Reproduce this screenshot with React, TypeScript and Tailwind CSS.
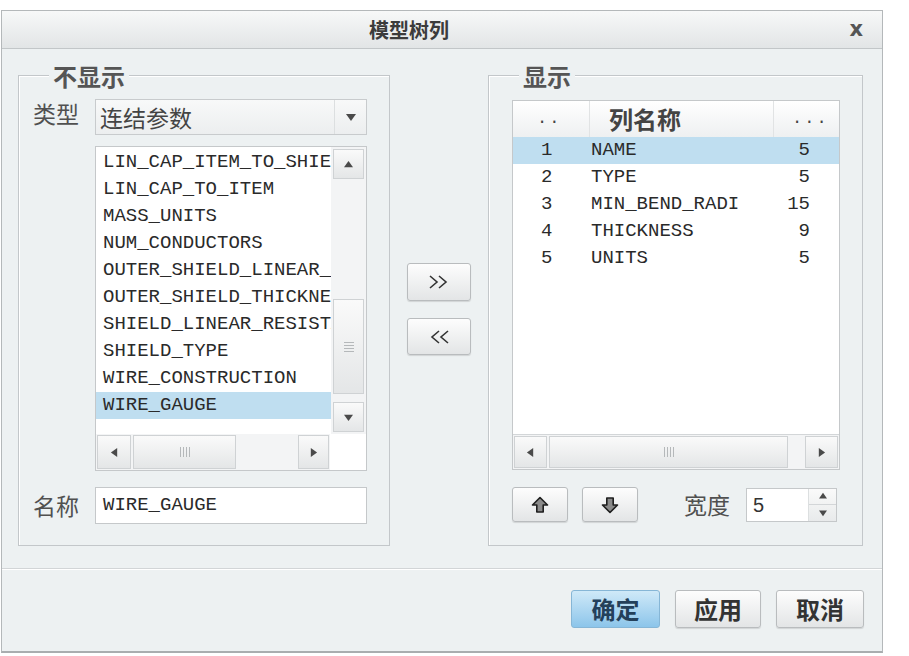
import React from "react";

const CJK = "font-['Noto_Sans_CJK_SC',sans-serif]";
const MONO = "font-['Liberation_Mono','Noto_Sans_CJK_SC',monospace]";

const HIDDEN_ITEMS = [
  "LIN_CAP_ITEM_TO_SHIELD",
  "LIN_CAP_TO_ITEM",
  "MASS_UNITS",
  "NUM_CONDUCTORS",
  "OUTER_SHIELD_LINEAR_RESISTANCE",
  "OUTER_SHIELD_THICKNESS",
  "SHIELD_LINEAR_RESISTANCE",
  "SHIELD_TYPE",
  "WIRE_CONSTRUCTION",
  "WIRE_GAUGE",
];

const SHOWN_COLUMNS = [
  { idx: 1, name: "NAME", width: 5 },
  { idx: 2, name: "TYPE", width: 5 },
  { idx: 3, name: "MIN_BEND_RADI", width: 15 },
  { idx: 4, name: "THICKNESS", width: 9 },
  { idx: 5, name: "UNITS", width: 5 },
];

// small solid triangle used on scroll / combo buttons
function Tri({ dir, size = 9 }: { dir: "up" | "down" | "left" | "right"; size?: number }) {
  const pts = {
    up: "0,8 5,1 10,8",
    down: "0,2 10,2 5,9",
    left: "8,0 8,10 1,5",
    right: "2,0 2,10 9,5",
  }[dir];
  return (
    <svg width={size} height={size} viewBox="0 0 10 10">
      <polygon points={pts} fill="#4a4a4a" />
    </svg>
  );
}

function BlockArrow({ up }: { up: boolean }) {
  return (
    <svg width="18" height="18" viewBox="0 0 18 18" className={up ? "" : "rotate-180"}>
      <path d="M9 1.5 L16.5 9 H12.2 V16 H5.8 V9 H1.5 Z" fill="#8a8a8a" stroke="#1f1f1f" strokeWidth="1.6" strokeLinejoin="round" />
    </svg>
  );
}

function Chevrons({ right }: { right: boolean }) {
  return (
    <svg width="22" height="16" viewBox="0 0 22 16" className={right ? "" : "rotate-180"}>
      <path d="M2 2 L9 8 L2 14 M11 2 L18 8 L11 14" fill="none" stroke="#333" strokeWidth="1.6" />
    </svg>
  );
}

function Grip({ vertical }: { vertical?: boolean }) {
  return (
    <div className={`flex ${vertical ? "flex-col gap-[2px]" : "flex-row gap-[2px]"}`}>
      {[0, 1, 2, 3].map((i) => (
        <div key={i} className={vertical ? "h-px w-[10px] bg-[#b5b8ba]" : "h-[10px] w-px bg-[#b5b8ba]"} />
      ))}
    </div>
  );
}

const scrollBtn =
  "flex items-center justify-center border border-[#cfd2d4] bg-gradient-to-b from-[#fafafa] to-[#e4e6e7]";

function Button({ children, className = "" }: { children: React.ReactNode; className?: string }) {
  return (
    <div
      className={`flex items-center justify-center rounded-[3px] border border-[#b9bcbe] bg-gradient-to-b from-[#fdfdfd] to-[#e3e5e6] shadow-[0_1px_1px_rgba(0,0,0,0.12)] ${className}`}
    >
      {children}
    </div>
  );
}

export default function App() {
  return (
    <div className={`h-[656px] w-[909px] overflow-hidden bg-white pt-[10px] ${CJK}`}>
      <div className="ml-px flex h-[643px] w-[882px] flex-col border-x border-t border-b-2 border-[#b4b8ba] border-b-[#a9adaf] bg-[#edf1f2]">
        {/* title bar */}
        <div className="flex h-[38px] items-center border-b border-[#c2c6c8] bg-gradient-to-b from-[#f7f8f8] to-[#e2e5e6]">
          <div className="flex-1 text-center text-[20px] font-bold leading-none text-[#3c3c3c]">
            模型树列
          </div>
          <div className="flex w-[66px] justify-end pr-[19px] font-['DejaVu_Sans',sans-serif] text-[21px] font-bold leading-none text-[#555]">
            x
          </div>
        </div>

        {/* body */}
        <div className="flex h-[519px] pl-[16px] pt-[26px]">
          {/* 不显示 group */}
          <div className="relative h-[471px] w-[372px] border border-[#c3c7ca] shadow-[inset_1px_1px_0_#ffffff] pl-[14px] pt-[23px]">
            <span className="absolute left-[30px] top-[-14px] bg-[#edf1f2] px-[4px] text-[24px] font-bold leading-[28px] text-[#555]">
              不显示
            </span>

            <div className="flex items-start">
              <div className="w-[62px] text-[23px] leading-[28px] text-[#505050]">类型</div>
              <div className="flex h-[36px] w-[272px] items-center border border-[#c8cbcd] bg-gradient-to-b from-[#f8f9f9] to-[#eceeef]">
                <div className="flex-1 pl-[4px] text-[23px] leading-none text-[#444]">连结参数</div>
                <div className="flex h-full w-[32px] items-center justify-center border-l border-[#dcdfe0]">
                  <Tri dir="down" size={10} />
                </div>
              </div>
            </div>

            {/* list box */}
            <div className="ml-[62px] mt-[11px] flex h-[325px] w-[272px] flex-col border border-[#c5c8ca] bg-white">
              <div className="flex h-[287px]">
                <div className={`flex-1 overflow-hidden pt-[2px] ${MONO} text-[19px] text-[#2a2a2a]`}>
                  {HIDDEN_ITEMS.map((t) => (
                    <div
                      key={t}
                      className={`h-[27px] overflow-hidden whitespace-nowrap pl-[7px] leading-[27px] ${t === "WIRE_GAUGE" ? "bg-[#bfdef0]" : ""}`}
                    >
                      {t}
                    </div>
                  ))}
                </div>
                <div className="flex w-[35px] flex-col bg-[#f3f4f5] p-[2px]">
                  <div className={`h-[30px] ${scrollBtn}`}>
                    <Tri dir="up" />
                  </div>
                  <div className="flex-1 pt-[120px]">
                    <div className={`h-[95px] ${scrollBtn}`}>
                      <Grip vertical />
                    </div>
                  </div>
                  <div className={`h-[30px] ${scrollBtn}`}>
                    <Tri dir="down" />
                  </div>
                </div>
              </div>
              <div className="flex flex-1">
                <div className="flex flex-1 bg-[#f3f4f5] p-[1px]">
                  <div className={`w-[34px] ${scrollBtn}`}>
                    <Tri dir="left" />
                  </div>
                  <div className="flex-1 pl-[2px] pr-[62px]">
                    <div className={`h-full ${scrollBtn}`}>
                      <Grip />
                    </div>
                  </div>
                  <div className={`w-[31px] ${scrollBtn}`}>
                    <Tri dir="right" />
                  </div>
                </div>
                <div className="w-[36px] bg-white" />
              </div>
            </div>

            <div className="mt-[16px] flex items-center">
              <div className="w-[62px] text-[23px] leading-none text-[#505050]">名称</div>
              <div className={`flex h-[37px] w-[272px] items-center border border-[#c5c8ca] bg-white pl-[7px] ${MONO} text-[19px] text-[#2a2a2a]`}>
                WIRE_GAUGE
              </div>
            </div>
          </div>

          {/* move buttons */}
          <div className="flex w-[98px] flex-col items-center gap-[17px] pt-[188px]">
            <Button className="h-[38px] w-[64px]">
              <Chevrons right />
            </Button>
            <Button className="h-[37px] w-[64px]">
              <Chevrons right={false} />
            </Button>
          </div>

          {/* 显示 group */}
          <div className="relative h-[471px] w-[375px] border border-[#c3c7ca] shadow-[inset_1px_1px_0_#ffffff] pl-[23px] pt-[24px]">
            <span className="absolute left-[30px] top-[-14px] bg-[#edf1f2] px-[4px] text-[24px] font-bold leading-[28px] text-[#555]">
              显示
            </span>

            <div className="flex h-[370px] w-[328px] flex-col border border-[#c5c8ca] bg-white">
              <div className="flex h-[36px] items-center bg-gradient-to-b from-[#ffffff] to-[#eef0f1] text-[#444]">
                <div className={`w-[76px] pl-[24px] ${MONO} text-[17px] tracking-[2px]`}>..</div>
                <div className="h-full w-[185px] border-x border-[#e1e3e4] pl-[19px] text-[24px] font-bold leading-[36px]">
                  列名称
                </div>
                <div className={`flex-1 pl-[18px] ${MONO} text-[17px] tracking-[2px]`}>...</div>
              </div>
              <div className={`flex-1 ${MONO} text-[19px] text-[#2a2a2a]`}>
                {SHOWN_COLUMNS.map((c) => (
                  <div key={c.idx} className={`flex h-[27px] items-center ${c.idx === 1 ? "bg-[#bfdef0]" : ""}`}>
                    <div className="w-[78px] pl-[28px]">{c.idx}</div>
                    <div className="w-[184px]">{c.name}</div>
                    <div className="w-[35px] text-right">{c.width}</div>
                  </div>
                ))}
              </div>
              <div className="flex h-[35px] border-t border-[#d3d6d8] bg-[#f3f4f5] p-[1px]">
                <div className={`w-[33px] ${scrollBtn}`}>
                  <Tri dir="left" />
                </div>
                <div className="flex-1 pl-[2px] pr-[17px]">
                  <div className={`h-full ${scrollBtn}`}>
                    <Grip />
                  </div>
                </div>
                <div className={`w-[33px] ${scrollBtn}`}>
                  <Tri dir="right" />
                </div>
              </div>
            </div>

            <div className="mt-[17px] flex items-center">
              <Button className="h-[35px] w-[56px]">
                <BlockArrow up />
              </Button>
              <Button className="ml-[14px] h-[35px] w-[56px]">
                <BlockArrow up={false} />
              </Button>
              <div className="ml-[46px] text-[23px] leading-none text-[#505050]">宽度</div>
              <div className="ml-[16px] flex h-[34px] w-[91px] border border-[#c5c8ca] bg-white">
                <div className="flex flex-1 items-center pl-[6px] font-['Liberation_Sans',sans-serif] text-[20px] text-[#333]">
                  5
                </div>
                <div className="flex w-[28px] flex-col border-l border-[#dcdfe0] bg-gradient-to-b from-[#fafafa] to-[#e8eaeb]">
                  <div className="flex flex-1 items-center justify-center border-b border-[#d3d6d8]">
                    <Tri dir="up" size={8} />
                  </div>
                  <div className="flex flex-1 items-center justify-center">
                    <Tri dir="down" size={8} />
                  </div>
                </div>
              </div>
            </div>
          </div>
        </div>

        {/* footer */}
        <div className="flex flex-1 items-start justify-end gap-[15px] border-t border-[#d2d5d7] pr-[18px] pt-[21px] shadow-[inset_0_1px_0_#ffffff]">
          <div className="flex h-[38px] w-[89px] items-center justify-center rounded-[3px] border border-[#86b6d6] bg-gradient-to-b from-[#cfe9f8] to-[#8cc5ea] text-[24px] font-bold text-[#24405a]">
            确定
          </div>
          <Button className="h-[38px] w-[86px] text-[24px] font-bold text-[#333]">应用</Button>
          <Button className="h-[38px] w-[88px] text-[24px] font-bold text-[#333]">取消</Button>
        </div>
      </div>
    </div>
  );
}
